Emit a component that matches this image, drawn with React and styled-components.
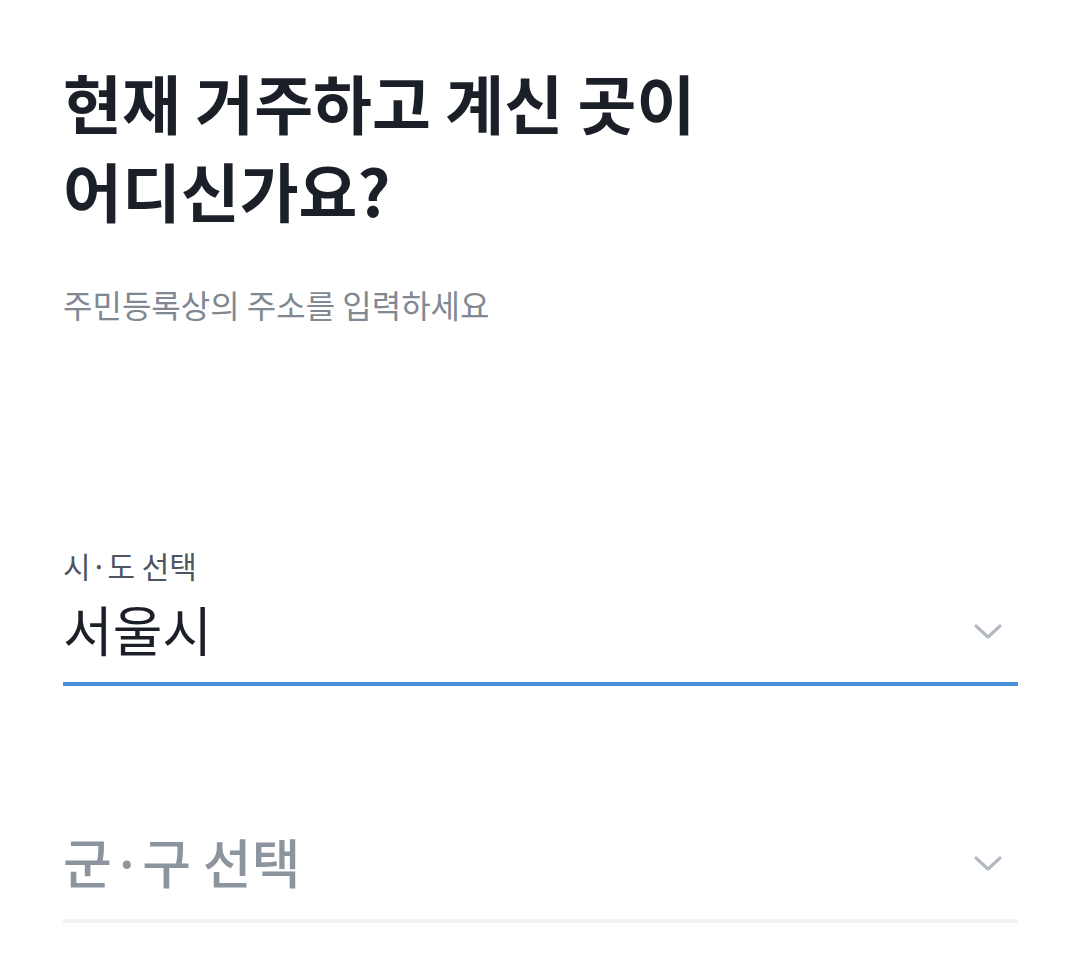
import styled, { createGlobalStyle } from "styled-components";

const GlobalStyle = createGlobalStyle`
  html, body {
    margin: 0;
    background: #ffffff;
  }
  body {
    font-family: "Noto Sans CJK KR", "Noto Sans", sans-serif;
    -webkit-font-smoothing: antialiased;
  }
`;

const Page = styled.main`
  display: flex;
  flex-direction: column;
  padding: 57px 62px 40px 63px;
`;

const Title = styled.h1`
  margin: 0;
  font-size: 64px;
  line-height: 88px;
  font-weight: 700;
  color: #1b1f27;
`;

const Subtitle = styled.p`
  margin: 51px 0 0;
  font-size: 32px;
  line-height: 40px;
  color: #7f8893;
`;

const Field = styled.div`
  display: flex;
  flex-direction: column;
  margin-top: ${(p) => p.$gap}px;
  border-bottom: ${(p) => (p.$active ? "4px solid #4a8fdb" : "4px solid #f1f2f4")};
  padding-bottom: ${(p) => p.$pad}px;
  cursor: pointer;
`;

const Label = styled.span`
  font-size: 30px;
  line-height: 40px;
  color: #4e5560;
  margin-bottom: 12px;
`;

const Row = styled.div`
  display: flex;
  align-items: center;
  justify-content: space-between;
`;

const Value = styled.span`
  font-size: ${(p) => (p.$placeholder ? 53 : 54)}px;
  line-height: 64px;
  color: ${(p) => (p.$placeholder ? "#8c949e" : "#1b1f27")};
  font-weight: ${(p) => (p.$placeholder ? 500 : 400)};
`;

const Chevron = () => (
  <svg width="32" height="20" viewBox="0 0 32 20" style={{ marginRight: 14, marginTop: 4 }}>
    <path
      d="M4 5 L16 16 L28 5"
      fill="none"
      stroke="#b3bac2"
      strokeWidth="3.2"
      strokeLinecap="round"
      strokeLinejoin="round"
    />
  </svg>
);

export default function App() {
  return (
    <>
      <GlobalStyle />
      <Page>
        <Title>
          현재 거주하고 계신 곳이
          <br />
          어디신가요?
        </Title>
        <Subtitle>주민등록상의 주소를 입력하세요</Subtitle>

        <Field $active $gap={221} $pad={21}>
          <Label>시·도 선택</Label>
          <Row>
            <Value>서울시</Value>
            <Chevron />
          </Row>
        </Field>

        <Field $gap={143} $pad={26}>
          <Row>
            <Value $placeholder>군·구 선택</Value>
            <Chevron />
          </Row>
        </Field>
      </Page>
    </>
  );
}
